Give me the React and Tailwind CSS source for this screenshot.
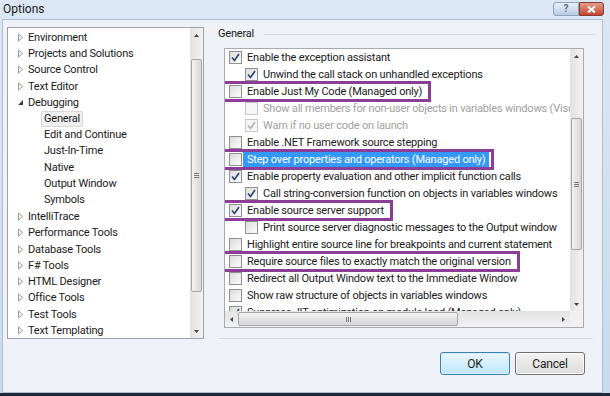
import React from "react";

const font = { fontFamily: 'Roboto, "Noto Sans", sans-serif' };

const treeItems = [
  { label: "Environment", level: 0 },
  { label: "Projects and Solutions", level: 0 },
  { label: "Source Control", level: 0 },
  { label: "Text Editor", level: 0 },
  { label: "Debugging", level: 0, open: true },
  { label: "General", level: 1, selected: true },
  { label: "Edit and Continue", level: 1 },
  { label: "Just-In-Time", level: 1 },
  { label: "Native", level: 1 },
  { label: "Output Window", level: 1 },
  { label: "Symbols", level: 1 },
  { label: "IntelliTrace", level: 0 },
  { label: "Performance Tools", level: 0 },
  { label: "Database Tools", level: 0 },
  { label: "F# Tools", level: 0 },
  { label: "HTML Designer", level: 0 },
  { label: "Office Tools", level: 0 },
  { label: "Test Tools", level: 0 },
  { label: "Text Templating", level: 0 },
];

const options = [
  { label: "Enable the exception assistant", checked: true },
  { label: "Unwind the call stack on unhandled exceptions", checked: true, indent: true },
  { label: "Enable Just My Code (Managed only)", mark: true },
  { label: "Show all members for non-user objects in variables windows (Visual Basic only)", indent: true, disabled: true },
  { label: "Warn if no user code on launch", indent: true, disabled: true, checked: true },
  { label: "Enable .NET Framework source stepping" },
  { label: "Step over properties and operators (Managed only)", mark: true, selected: true },
  { label: "Enable property evaluation and other implicit function calls", checked: true },
  { label: "Call string-conversion function on objects in variables windows", checked: true, indent: true },
  { label: "Enable source server support", checked: true, mark: true },
  { label: "Print source server diagnostic messages to the Output window", indent: true },
  { label: "Highlight entire source line for breakpoints and current statement" },
  { label: "Require source files to exactly match the original version", mark: true },
  { label: "Redirect all Output Window text to the Immediate Window" },
  { label: "Show raw structure of objects in variables windows" },
  { label: "Suppress JIT optimization on module load (Managed only)", checked: true },
];

function Arrow({ open }) {
  if (open) {
    return (
      <svg width="7" height="7" viewBox="0 0 7 7">
        <path d="M6 1 L6 6 L1 6 Z" fill="#404040" />
      </svg>
    );
  }
  return (
    <svg width="7" height="9" viewBox="0 0 7 9">
      <path d="M1.5 1 L5.5 4.5 L1.5 8 Z" fill="none" stroke="#9a9a9a" strokeWidth="1" />
    </svg>
  );
}

function Check({ checked, disabled }) {
  return (
    <span
      className={`flex h-[13px] w-[13px] shrink-0 items-center justify-center border ${
        disabled ? "border-[#c8c8c8] bg-[#f7f7f7]" : "border-[#8e8f8f] bg-gradient-to-br from-[#dcdcdc] to-[#fbfbfb]"
      }`}
    >
      {checked && (
        <svg width="9" height="9" viewBox="0 0 9 9">
          <path
            d="M1 4.5 L3.5 7.5 L8 1"
            fill="none"
            stroke={disabled ? "#b0b0b0" : "#2a3f6e"}
            strokeWidth="1.6"
          />
        </svg>
      )}
    </span>
  );
}

function ScrollArrow({ dir }) {
  const paths = {
    up: "M1 4 L3.5 1 L6 4 Z",
    down: "M1 1 L3.5 4 L6 1 Z",
    left: "M4 1 L1 3.5 L4 6 Z",
    right: "M1 1 L4 3.5 L1 6 Z",
  };
  const vertical = dir === "up" || dir === "down";
  return (
    <svg width={vertical ? 7 : 5} height={vertical ? 5 : 7} viewBox={vertical ? "0 0 7 5" : "0 0 5 7"}>
      <path d={paths[dir]} fill="#444" />
    </svg>
  );
}

function VScroll({ thumbTop, thumbHeight }) {
  return (
    <div className="flex w-[13px] shrink-0 flex-col bg-gradient-to-r from-[#e3e3e3] to-[#f1f1f1]">
      <div className="flex h-[14px] items-center justify-center">
        <ScrollArrow dir="up" />
      </div>
      <div className="flex-1 px-[1px]">
        <div
          className="flex items-center justify-center rounded-[2px] border border-[#a5a5a5] bg-gradient-to-r from-[#f3f3f3] to-[#d6d6d6]"
          style={{ marginTop: thumbTop, height: thumbHeight }}
        >
          <div className="flex flex-col gap-[1px]">
            <div className="h-px w-[5px] bg-[#777]" />
            <div className="h-px w-[5px] bg-[#777]" />
            <div className="h-px w-[5px] bg-[#777]" />
          </div>
        </div>
      </div>
      <div className="flex h-[14px] items-center justify-center">
        <ScrollArrow dir="down" />
      </div>
    </div>
  );
}

export default function App() {
  return (
    <div className="h-[396px] w-[610px] overflow-hidden bg-[#1d2a38]" style={font}>
      <div className="flex h-[393px] w-[610px] flex-col bg-gradient-to-b from-[#dbe7f4] to-[#c9daee] pr-[7px] pl-[2px]">
        {/* title bar */}
        <div className="flex h-[19px] shrink-0 items-start justify-between">
          <span className="mt-[2px] ml-[1px] text-[12px] leading-[14px] text-[#1b1b1b]">Options</span>
          <div className="mt-[2px] mr-[-1px] flex">
            <div className="flex h-[14px] w-[26px] items-center justify-center rounded-l-[3px] border border-[#8ea2bb] bg-gradient-to-b from-[#e8f0f8] to-[#b9cce3] text-[10px] leading-none font-bold text-[#5a6f8c]">
              ?
            </div>
            <div className="flex h-[14px] w-[25px] items-center justify-center rounded-r-[3px] border border-[#8a3a2e] bg-gradient-to-b from-[#e49b8c] to-[#c4442f]">
              <svg width="9" height="7" viewBox="0 0 9 7">
                <path d="M1 0.5 L8 6.5 M8 0.5 L1 6.5" stroke="#fff" strokeWidth="2" />
              </svg>
            </div>
          </div>
        </div>

        {/* client area */}
        <div className="flex flex-1 border border-[#aebfd3] bg-[#eef2f7] pt-[7px] pl-[4px] text-[11px] tracking-[-0.2px] text-[#1a1a1a]">
          {/* tree */}
          <div className="flex h-[312px] w-[197px] shrink-0 border border-[#9aa2ab] bg-white">
            <div className="flex-1 pt-[1px]">
              {treeItems.map((item) => (
                <div key={item.label} className="flex h-[16.3px] items-center">
                  {item.level === 0 ? (
                    <>
                      <span className="flex w-[20px] justify-end pr-[4px]">
                        <Arrow open={item.open} />
                      </span>
                      <span className="leading-[15px]">{item.label}</span>
                    </>
                  ) : (
                    <span
                      className={`ml-[33px] px-[2px] leading-[14px] ${
                        item.selected ? "rounded-[2px] border border-[#d9d9d9] bg-[#f0f0f0]" : "border border-transparent"
                      }`}
                    >
                      {item.label}
                    </span>
                  )}
                </div>
              ))}
            </div>
            <VScroll thumbTop={17} thumbHeight={233} />
          </div>

          {/* right side */}
          <div className="ml-[14px] flex w-[377px] flex-col">
            <div className="flex h-[14px] items-center">
              <span className="leading-[14px]">General</span>
              <div className="ml-[10px] h-px flex-1 bg-[#d5dbe2]" />
            </div>

            <div className="mt-[7px] ml-[6px] flex h-[280px] w-[360px] flex-col border border-[#a7acb3] bg-white">
              <div className="flex min-h-0 flex-1">
                <div className="relative flex-1 overflow-hidden">
                  {options.map((o) => (
                    <div key={o.label} className="flex h-[17px] items-center whitespace-nowrap">
                      <div className={`relative flex items-center ${o.indent ? "ml-[20px]" : "ml-[4px]"}`}>
                        {o.mark && (
                          <span className="absolute -top-[3px] -right-[5px] -bottom-[3px] -left-[7px] border-[3px] border-[#8b3d98]" />
                        )}
                        <Check checked={o.checked} disabled={o.disabled} />
                        <span
                          className={`ml-[1px] px-[4px] leading-[15px] ${
                            o.selected ? "bg-[#3399ff] text-white" : o.disabled ? "text-[#a0a0a0]" : ""
                          }`}
                        >
                          {o.label}
                        </span>
                      </div>
                    </div>
                  ))}
                </div>
                <VScroll thumbTop={55} thumbHeight={132} />
              </div>
              <div className="flex h-[16px] shrink-0">
                <div className="flex flex-1 items-center bg-gradient-to-b from-[#e3e3e3] to-[#f1f1f1]">
                  <div className="flex w-[13px] justify-center">
                    <ScrollArrow dir="left" />
                  </div>
                  <div className="flex h-[14px] w-[220px] items-center justify-center rounded-[2px] border border-[#a5a5a5] bg-gradient-to-b from-[#f3f3f3] to-[#d6d6d6]">
                    <div className="flex gap-[1px]">
                      <div className="h-[5px] w-px bg-[#777]" />
                      <div className="h-[5px] w-px bg-[#777]" />
                      <div className="h-[5px] w-px bg-[#777]" />
                    </div>
                  </div>
                  <div className="flex-1" />
                  <div className="flex w-[13px] justify-center">
                    <ScrollArrow dir="right" />
                  </div>
                </div>
                <div className="w-[13px] bg-[#f0f0f0]" />
              </div>
            </div>

            <div className="mt-[10px] h-px w-[375px] bg-[#d5dbe2]" />

            <div className="mt-[13px] flex justify-end gap-[5px] pr-[10px]">
              <button className="h-[23px] w-[70px] rounded-[3px] border border-[#3c7fb1] bg-gradient-to-b from-[#eaf6fd] to-[#bee6fd] text-[12px] text-[#1e1e1e] shadow-[inset_0_0_0_1px_#d9f0fc]">
                OK
              </button>
              <button className="h-[23px] w-[70px] rounded-[3px] border border-[#707070] bg-gradient-to-b from-[#f2f2f2] to-[#dddddd] text-[12px] text-[#1e1e1e] shadow-[inset_0_0_0_1px_#fbfbfb]">
                Cancel
              </button>
            </div>
          </div>
        </div>
      </div>
    </div>
  );
}
